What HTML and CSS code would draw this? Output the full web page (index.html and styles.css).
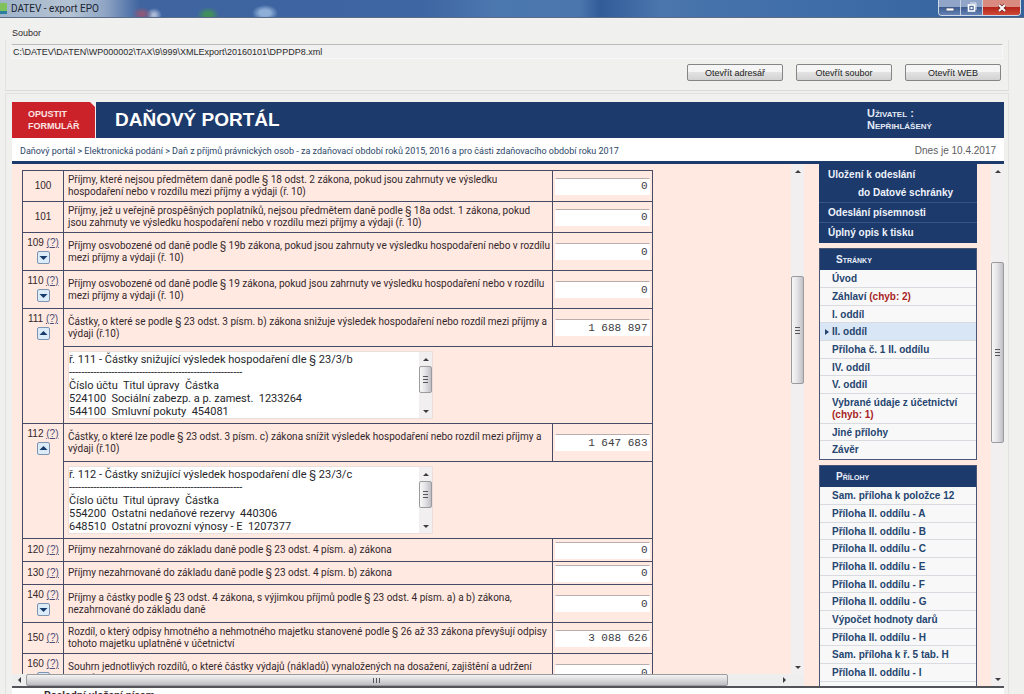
FILE: index.html
```html
<!DOCTYPE html>
<html lang="cs">
<head>
<meta charset="utf-8">
<title>DATEV - export EPO</title>
<link rel="stylesheet" href="styles.css">
</head>
<body>
<header class="titlebar">
  <span class="app-icon"></span>
  <h1 class="window-title">DATEV - export EPO</h1>
  <div class="window-controls">
    <button class="control" aria-label="Minimalizovat"><svg width="12" height="10" viewBox="0 0 12 10"><rect x="2" y="5" width="8" height="3" rx="1" fill="#fff" stroke="#4b5874" stroke-width="0.8"/></svg></button>
    <button class="control" aria-label="Obnovit"><svg width="12" height="11" viewBox="0 0 12 11"><path d="M4 1h6v7" fill="none" stroke="#dfe6f2"/><rect x="2.5" y="3" width="6" height="6" fill="#4b6796" stroke="#fff" stroke-width="1.6"/><rect x="4.5" y="5" width="2" height="2" fill="#fff"/></svg></button>
    <button class="control close" aria-label="Zavřít"><svg width="12" height="10" viewBox="0 0 12 10"><path d="M3 2l6 6M9 2l-6 6" stroke="#6e2a24" stroke-width="3.4"/><path d="M3 2l6 6M9 2l-6 6" stroke="#fff" stroke-width="2"/></svg></button>
  </div>
</header>
<section class="file-section">
  <label class="file-label" for="path">Soubor</label>
  <div class="file-group">
    <input class="path" id="path" type="text" readonly value="C:\DATEV\DATEN\WP000002\TAX\9\999\XMLExport\20160101\DPPDP8.xml">
    <div class="actions">
      <button class="action">Otevřít adresář</button>
      <button class="action">Otevřít soubor</button>
      <button class="action">Otevřít WEB</button>
    </div>
  </div>
</section>
<div class="browser">
  <div class="portal-head">
    <button class="leave">OPUSTIT<br>FORMULÁŘ</button>
    <div class="banner">
      <h2 class="portal-title">DAŇOVÝ PORTÁL</h2>
      <div class="user">Uživatel :<br>Nepřihlášený</div>
    </div>
  </div>
  <div class="crumbs">
    <nav class="crumb-text"><a href="#">Daňový portál</a> &gt; <a href="#">Elektronická podání</a> &gt; Daň z příjmů právnických osob - za zdaňovací období roků 2015, 2016 a pro části zdaňovacího období roku 2017</nav>
    <span class="today">Dnes je 10.4.2017</span>
  </div>
  <div class="workspace">
    <main class="main-pane">
      <div class="main-view">
        <div class="sheet">
          <table class="form-table">
            <colgroup><col class="col-num"><col><col class="col-val"></colgroup>
            <tr class="low"><td class="num">100</td><td class="desc">Příjmy, které nejsou předmětem daně podle § 18 odst. 2 zákona, pokud jsou zahrnuty ve výsledku<br>hospodaření nebo v rozdílu mezi příjmy a výdaji (ř. 10)</td><td class="val"><input aria-label="Řádek 100" value="0"></td></tr>
            <tr class="low"><td class="num">101</td><td class="desc">Příjmy, jež u veřejně prospěšných poplatníků, nejsou předmětem daně podle § 18a odst. 1 zákona, pokud<br>jsou zahrnuty ve výsledku hospodaření nebo v rozdílu mezi příjmy a výdaji (ř. 10)</td><td class="val"><input aria-label="Řádek 101" value="0"></td></tr>
            <tr class="mid"><td class="num top">109 <a href="#">(?)</a><button class="toggle" aria-label="Rozbalit 109"><svg width="11" height="11" viewBox="0 0 11 11"><path d="M1.500 4h8L5.500 8z"/></svg></button></td><td class="desc">Příjmy osvobozené od daně podle § 19b zákona, pokud jsou zahrnuty ve výsledku hospodaření nebo v rozdílu<br>mezi příjmy a výdaji (ř. 10)</td><td class="val"><input aria-label="Řádek 109" value="0"></td></tr>
            <tr class="mid"><td class="num top">110 <a href="#">(?)</a><button class="toggle" aria-label="Rozbalit 110"><svg width="11" height="11" viewBox="0 0 11 11"><path d="M1.500 4h8L5.500 8z"/></svg></button></td><td class="desc">Příjmy osvobozené od daně podle § 19 zákona, pokud jsou zahrnuty ve výsledku hospodaření nebo v rozdílu<br>mezi příjmy a výdaji (ř. 10)</td><td class="val"><input aria-label="Řádek 110" value="0"></td></tr>
            <tr class="mid"><td class="num top" rowspan="2">111 <a href="#">(?)</a><button class="toggle" aria-label="Sbalit 111"><svg width="11" height="11" viewBox="0 0 11 11"><path d="M1.500 7h8L5.500 3z"/></svg></button></td><td class="desc">Částky, o které se podle § 23 odst. 3 písm. b) zákona snižuje výsledek hospodaření nebo rozdíl mezi příjmy a<br>výdaji (ř.10)</td><td class="val"><input aria-label="Řádek 111" value="1 688 897"></td></tr>
            <tr class="tall"><td class="note" colspan="2"><div class="note-box"><textarea aria-label="Poznámka k řádku 111" rows="5">ř. 111 - Částky snižující výsledek hospodaření dle § 23/3/b
---------------------------------------------------------
Číslo účtu  Titul úpravy  Částka
524100  Sociální zabezp. a p. zamest.  1233264
544100  Smluvní pokuty  454081</textarea><div class="vbar vbar-note"><i class="arrow up"></i><i class="thumb"></i><i class="arrow down"></i></div></div></td></tr>
            <tr class="mid"><td class="num top" rowspan="2">112 <a href="#">(?)</a><button class="toggle" aria-label="Sbalit 112"><svg width="11" height="11" viewBox="0 0 11 11"><path d="M1.500 7h8L5.500 3z"/></svg></button></td><td class="desc">Částky, o které lze podle § 23 odst. 3 písm. c) zákona snížit výsledek hospodaření nebo rozdíl mezi příjmy a<br>výdaji (ř.10)</td><td class="val"><input aria-label="Řádek 112" value="1 647 683"></td></tr>
            <tr class="tall"><td class="note" colspan="2"><div class="note-box"><textarea aria-label="Poznámka k řádku 112" rows="5">ř. 112 - Částky snižující výsledek hospodaření dle § 23/3/c
---------------------------------------------------------
Číslo účtu  Titul úpravy  Částka
554200  Ostatni nedaňové rezervy  440306
648510  Ostatní provozní výnosy - E  1207377</textarea><div class="vbar vbar-note"><i class="arrow up"></i><i class="thumb"></i><i class="arrow down"></i></div></div></td></tr>
            <tr class="line"><td class="num">120 <a href="#">(?)</a></td><td class="desc">Příjmy nezahrnované do základu daně podle § 23 odst. 4 písm. a) zákona</td><td class="val"><input aria-label="Řádek 120" value="0"></td></tr>
            <tr class="line"><td class="num">130 <a href="#">(?)</a></td><td class="desc">Příjmy nezahrnované do základu daně podle § 23 odst. 4 písm. b) zákona</td><td class="val"><input aria-label="Řádek 130" value="0"></td></tr>
            <tr class="mid"><td class="num top">140 <a href="#">(?)</a><button class="toggle" aria-label="Rozbalit 140"><svg width="11" height="11" viewBox="0 0 11 11"><path d="M1.500 4h8L5.500 8z"/></svg></button></td><td class="desc">Příjmy a částky podle § 23 odst. 4 zákona, s výjimkou příjmů podle § 23 odst. 4 písm. a) a b) zákona,<br>nezahrnované do základu daně</td><td class="val"><input aria-label="Řádek 140" value="0"></td></tr>
            <tr class="low"><td class="num">150 <a href="#">(?)</a></td><td class="desc">Rozdíl, o který odpisy hmotného a nehmotného majetku stanovené podle § 26 až 33 zákona převyšují odpisy<br>tohoto majetku uplatněné v účetnictví</td><td class="val"><input aria-label="Řádek 150" value="3 088 626"></td></tr>
            <tr class="mid"><td class="num top">160 <a href="#">(?)</a><button class="toggle" aria-label="Rozbalit 160"><svg width="11" height="11" viewBox="0 0 11 11"><path d="M1.500 4h8L5.500 8z"/></svg></button></td><td class="desc">Souhrn jednotlivých rozdílů, o které částky výdajů (nákladů) vynaložených na dosažení, zajištění a udržení<br>příjmů převyšují náklady uplatněné v účetnictví</td><td class="val"><input aria-label="Řádek 160" value="0"></td></tr>
          </table>
        </div>
        <div class="vbar vbar-main"><i class="arrow up"></i><i class="thumb"></i><i class="arrow down"></i></div>
      </div>
      <div class="hbar-row">
        <div class="hbar"><i class="arrow left"></i><i class="thumb"></i><i class="arrow right"></i></div>
      </div>
    </main>
    <aside class="side-pane">
      <div class="side-menus">
        <nav class="send-menu">
          <a class="send two" href="#">Uložení k odeslání<span>do Datové schránky</span></a>
          <a class="send" href="#">Odeslání písemnosti</a>
          <a class="send" href="#">Úplný opis k tisku</a>
        </nav>
        <nav class="panel">
          <h3>Stránky</h3>
          <a href="#">Úvod</a>
          <a href="#">Záhlaví <em>(chyb: 2)</em></a>
          <a href="#">I. oddíl</a>
          <a class="current" href="#">II. oddíl</a>
          <a href="#">Příloha č. 1 II. oddílu</a>
          <a href="#">IV. oddíl</a>
          <a href="#">V. oddíl</a>
          <a class="double" href="#">Vybrané údaje z účetnictví<br><em>(chyb: 1)</em></a>
          <a href="#">Jiné přílohy</a>
          <a href="#">Závěr</a>
        </nav>
        <nav class="panel">
          <h3>Přílohy</h3>
          <a href="#">Sam. příloha k položce 12</a>
          <a href="#">Příloha II. oddílu - A</a>
          <a href="#">Příloha II. oddílu - B</a>
          <a href="#">Příloha II. oddílu - C</a>
          <a href="#">Příloha II. oddílu - E</a>
          <a href="#">Příloha II. oddílu - F</a>
          <a href="#">Příloha II. oddílu - G</a>
          <a href="#">Výpočet hodnoty darů</a>
          <a href="#">Příloha II. oddílu - H</a>
          <a href="#">Sam. příloha k ř. 5 tab. H</a>
          <a href="#">Příloha II. oddílu - I</a>
          <a href="#">Sam. příloha k tab. I</a>
        </nav>
      </div>
      <div class="vbar vbar-side"><i class="arrow up"></i><i class="thumb"></i><i class="arrow down"></i></div>
    </aside>
  </div>
  <footer class="status">Poslední uložení písem.</footer>
</div>
</body>
</html>
```
FILE: styles.css
```css
* { box-sizing: border-box; }

:root {
  --navy: #1d3a6c;
  --pink: #ffe9e1;
  --rule: #474b66;
  --ink: #33272b;
  --compact: Roboto, "Liberation Sans", sans-serif;
}

body {
  margin: 0;
  height: 100vh;
  display: flex;
  flex-direction: column;
  overflow: hidden;
  background: #f0f0ef;
  font-family: "Liberation Sans", Arial, sans-serif;
  font-size: 10px;
  line-height: 12px;
  color: var(--ink);
}

h1, h2, h3 { margin: 0; font-size: inherit; }
button, input, textarea { font-family: inherit; font-size: inherit; margin: 0; }
a { color: inherit; text-decoration: none; }

/* Window frame */
.titlebar {
  flex: none;
  height: 18px;
  display: flex;
  align-items: center;
  gap: 4px;
  border-bottom: 1px solid #5b6c88;
  background:
    radial-gradient(ellipse 10px 7px at 142px 14px, #8d5a7a 20%, transparent),
    radial-gradient(ellipse 8px 7px at 154px 15px, #a9b9d6 20%, transparent),
    radial-gradient(ellipse 11px 8px at 208px 15px, #3f8f5c 30%, transparent),
    radial-gradient(ellipse 13px 8px at 265px 13px, #8dafd8 40%, transparent),
    linear-gradient(90deg, #9fb3c9 0, #b5c4d3 70px, #8fa5c5 105px, #3f64a0 140px, #3e66a2 420px, #4c78b0 500px, #4a75ad 580px, #325c98 600px, #4a75ad 660px, #3c6ba6 860px, #35619b 100%);
}
.app-icon { width: 7px; height: 11px; background: linear-gradient(#7fc25c 70%, #2c7f9e 70%); }
.window-title { flex: 1; font-family: var(--compact); font-size: 10px; font-weight: 400; color: #1b2330; }
.window-controls { align-self: flex-start; display: flex; margin-right: 3px; border: 1px solid #d0d9e8; border-top: 0; border-radius: 0 0 4px 4px; overflow: hidden; }
.control { display: flex; align-items: center; justify-content: center; width: 22px; height: 15px; padding: 0; border: 0; border-right: 1px solid #c5d0e2; background: linear-gradient(#91a5c8 45%, #3e5c90 50%, #6482b3); }
.close { width: 37px; border-right: 0; background: linear-gradient(#d98b80 45%, #b5251b 50%, #cf4a38); }

/* File section */
.file-section { flex: none; padding: 9px 15px 0 5px; font-size: 9px; }
.file-label { display: block; width: 40px; padding-left: 7px; }
.file-group { padding: 4px 5px 9px 5px; border: 1px solid #e3e3e3; border-top-color: transparent; border-bottom-color: #dcdcdc; }
.path { display: block; width: 100%; height: 15px; padding: 0 1px; border: 1px solid #f8f8f8; border-top: 1px solid #bcbcbc; background: #f1f1f1; color: #2a2a2a; }
.actions { display: flex; justify-content: flex-end; gap: 13px; margin-top: 5px; padding-right: 2px; }
.action { width: 96px; height: 17px; padding: 0; border: 1px solid #858585; border-radius: 2px; background: linear-gradient(#f5f5f5 45%, #e2e2e2 50%, #d2d2d2); color: #222; }

/* Embedded portal */
.browser { flex: 1; min-height: 0; display: flex; flex-direction: column; margin: 2px 15px 0 5px; padding: 8px 4px 0 6px; border: 1px solid #e2e2e2; border-bottom: 0; }
.portal-head { flex: none; display: flex; height: 36px; background: #f3eff0; }
.leave { width: 83px; padding: 0 0 0 16px; border: 0; background: #cb2229; clip-path: polygon(0 0, 78px 0, 100% 5px, 100% 100%, 0 100%); color: #fbe4e4; font-size: 9px; font-weight: 700; line-height: 12px; text-align: left; }
.banner { flex: 1; display: flex; align-items: center; justify-content: space-between; margin-left: 1px; padding: 0 72px 0 19px; background: var(--navy); color: #fff; }
.portal-title { font-size: 19px; line-height: 24px; }
.user { width: 65px; padding-bottom: 3px; color: #e3ebf6; font-size: 11px; font-variant: small-caps; font-weight: 700; white-space: nowrap; }
.crumbs { flex: none; display: flex; align-items: center; justify-content: space-between; height: 26px; padding: 0 8px; border-bottom: 3px solid var(--navy); background: #fff; }
.crumb-text { padding-top: 2px; font-family: var(--compact); font-size: 9px; color: #2c4668; white-space: nowrap; }
.today { padding-top: 2px; color: #5c5c60; }
.workspace { flex: 1; min-height: 0; display: flex; background: var(--pink); border-bottom: 2px solid #53535a; }

/* Main pane */
.main-pane { flex: 1; min-width: 0; display: flex; flex-direction: column; }
.main-view { flex: 1; min-height: 0; display: flex; }
.sheet { flex: 1; min-width: 0; padding: 6px 0 0 10px; overflow: hidden; background: var(--pink); }
.form-table { width: 82%; table-layout: fixed; border-collapse: collapse; }
.col-num { width: 41px; }
.col-val { width: 100px; }
.form-table td { padding: 0 0 0 4px; border: 1px solid var(--rule); vertical-align: middle; }
.desc { font-family: var(--compact); white-space: nowrap; }
.low { height: 31px; }
.mid { height: 38px; }
.tall { height: 77px; }
.line { height: 23px; }
.form-table .num { padding: 0; text-align: center; white-space: nowrap; }
.form-table .num.top { padding-top: 4px; vertical-align: top; }
.num a { color: #4b4f77; text-decoration: underline; }
.form-table .val { padding: 0 2px; }
.val input { display: block; width: 100%; height: 17px; padding: 0 1px; border: 1px solid #fff; border-top-color: #b9adab; background: #fff; font-family: "Liberation Mono", monospace; font-size: 11px; text-align: right; color: #3a3a40; }
.toggle { display: flex; width: 13px; height: 13px; margin: 2px auto 0; padding: 0; border: 1px solid #7d93b2; border-radius: 2px; background: #dcebf8; }
.toggle svg { fill: #173a6b; }
.note-box { display: flex; width: 365px; height: 68px; border: 1px solid #eadfda; background: #fff; }
.note-box textarea { flex: 1; min-width: 0; height: 66px; padding: 1px 0 0 0; border: 0; resize: none; overflow: hidden; background: #fff; font-family: var(--compact); font-size: 11px; line-height: 13px; color: #26262a; }

/* Scroll bars */
.vbar { flex: none; display: grid; width: 13px; justify-items: stretch; background: #f1efef; }
.vbar-main { grid-template-rows: 14px 98fr 108fr 276fr 14px; }
.vbar-side { grid-template-rows: 14px 84fr 182fr 229fr 14px; }
.vbar-note { grid-template-rows: 14px 0 27px 1fr 14px; }
.thumb { border: 1px solid #9b9b9e; border-radius: 2px; }
.vbar .thumb { grid-row: 3; background: repeating-linear-gradient(#55555a 0 1px, transparent 1px 3px) center / 5px 7px no-repeat, linear-gradient(90deg, #f7f7f7, #e5e5e8 45%, #bfbfc6); }
.arrow { place-self: center; width: 0; height: 0; border: 3px solid transparent; }
.vbar .down { grid-row: 5; }
.up { border-top: 0; border-bottom-color: #3c3c42; }
.down { border-bottom: 0; border-top-color: #3c3c42; }
.left { border-left: 0; border-right-color: #3c3c42; }
.right { border-right: 0; border-left-color: #3c3c42; }
.hbar-row { flex: none; display: flex; height: 12px; background: #efeeee; }
.hbar { flex: 1; display: grid; grid-template-columns: 14px 701fr 49fr 14px; margin-right: 13px; }
.hbar .thumb { background: repeating-linear-gradient(90deg, #55555a 0 1px, transparent 1px 3px) center / 7px 5px no-repeat, linear-gradient(#f4f4f4, #dcdcdf 45%, #bcbcc2); }
.hbar .right { grid-column: 4; }

/* Side pane */
.side-pane { flex: none; display: flex; width: 200px; }
.side-menus { flex: 1; display: flex; flex-direction: column; gap: 5px; padding: 0 14px 0 15px; overflow: hidden; font-weight: 700; }
.send-menu { flex: none; padding-bottom: 1px; background: var(--navy); color: #edf3fb; }
.send { display: block; padding: 4px 9px 3px; border-top: 1px solid #35548a; }
.send span { display: block; padding: 6px 0 0 30px; }
.send.two { padding-top: 5px; border-top: 0; }
.panel { flex: none; border: 1px solid #4a5678; background: #f8f8f9; color: #25456f; }
.panel h3 { height: 21px; padding-left: 16px; background: var(--navy); color: #e9f0fa; font-variant: small-caps; line-height: 22px; }
.panel a { display: block; height: 18px; padding-left: 12px; border-bottom: 1px solid #d9dbe0; line-height: 17px; white-space: nowrap; }
.panel a:nth-of-type(3n) { height: 17px; }
.panel a:last-child { border-bottom: 0; }
.panel .double { height: 30px; padding-top: 3px; line-height: 12px; }
.panel .current { background: #d9e6f6; }
.current::before { content: ""; float: left; margin: 6px 0 0 -7px; border: 3px solid transparent; border-left: 4px solid #25456f; border-right: 0; }
.panel em { font-style: normal; color: #a81f24; }

.status { flex: none; height: 6px; padding: 2px 0 0 32px; overflow: hidden; background: #fff; font-weight: 700; }
```
